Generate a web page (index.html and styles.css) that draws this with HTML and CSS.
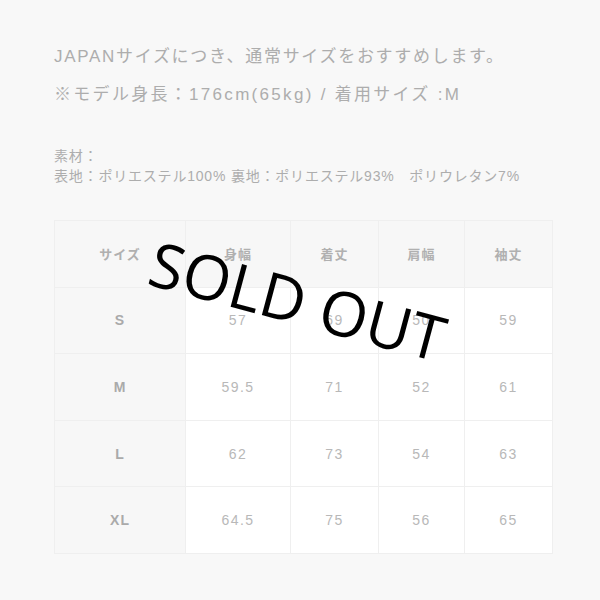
FILE: index.html
```html
<!DOCTYPE html>
<html lang="ja">
<head>
<meta charset="utf-8">
<link rel="stylesheet" href="styles.css">
</head>
<body>
<div class="page">
  <div class="notes">
    <p class="note">JAPANサイズにつき、通常サイズをおすすめします。</p>
    <p class="note note-model">※モデル身長：176cm(65kg) / 着用サイズ :M</p>
  </div>
  <div class="material">
    <p>素材：</p>
    <p>表地：ポリエステル100% 裏地：ポリエステル93%　ポリウレタン7%</p>
  </div>
  <table class="sizes">
    <colgroup>
      <col class="c1"><col class="c2"><col class="c3"><col class="c4"><col class="c5">
    </colgroup>
    <thead>
      <tr><th>サイズ</th><th>身幅</th><th>着丈</th><th>肩幅</th><th>袖丈</th></tr>
    </thead>
    <tbody>
      <tr><th>S</th><td>57</td><td>69</td><td>50</td><td>59</td></tr>
      <tr><th>M</th><td>59.5</td><td>71</td><td>52</td><td>61</td></tr>
      <tr><th>L</th><td>62</td><td>73</td><td>54</td><td>63</td></tr>
      <tr><th>XL</th><td>64.5</td><td>75</td><td>56</td><td>65</td></tr>
    </tbody>
  </table>
  <div class="soldout">SOLD OUT</div>
</div>
</body>
</html>
```
FILE: styles.css
```css
html, body {
  margin: 0;
  padding: 0;
  background: #f8f8f8;
}
body {
  width: 600px;
  height: 600px;
  overflow: hidden;
  font-family: "Liberation Sans", "Noto Sans CJK JP", sans-serif;
  color: #adadad;
}
.page {
  position: relative;
  padding: 38px 40px 0 54px;
}
.notes .note {
  margin: 0;
  font-size: 17px;
  line-height: 38px;
  letter-spacing: 1.7px;
  white-space: nowrap;
}
.notes .note-model {
  letter-spacing: 2.3px;
}
.material {
  margin-top: 32px;
  font-size: 14px;
  line-height: 20px;
  letter-spacing: 0.8px;
}
.material p {
  margin: 0;
  white-space: nowrap;
}
.sizes {
  margin-top: 34px;
  border-collapse: collapse;
  table-layout: fixed;
  width: 498px;
}
.c1 { width: 131px; }
.c2 { width: 105px; }
.c3 { width: 88px; }
.c4 { width: 86px; }
.c5 { width: 88px; }
.sizes th, .sizes td {
  border: 1px solid #efefef;
  height: 65.6px;
  padding: 0;
  text-align: center;
  vertical-align: middle;
}
.sizes thead th {
  background: #f7f7f7;
  font-size: 13px;
  font-weight: bold;
  color: #b0b0b0;
  letter-spacing: 1px;
}
.sizes tbody th {
  background: #f7f7f7;
  font-size: 14px;
  font-weight: bold;
  color: #aaaaaa;
  letter-spacing: 1px;
}
.sizes td {
  background: #ffffff;
  font-size: 14px;
  color: #b8b8b8;
  letter-spacing: 1.5px;
}
.soldout {
  position: absolute;
  left: 298px;
  top: 300px;
  transform: translate(-50%, -50%) rotate(15deg);
  font-family: "Open Sans", sans-serif;
  font-size: 62px;
  line-height: 1;
  color: #000;
  white-space: nowrap;
}
```
